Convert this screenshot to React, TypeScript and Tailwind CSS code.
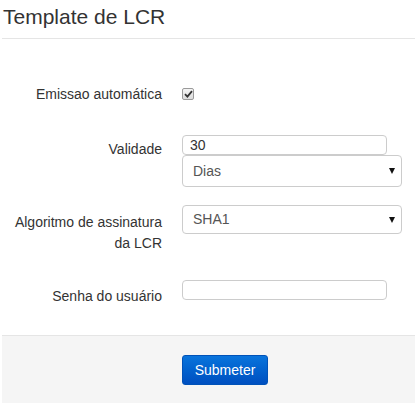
import React from 'react';

const font = { fontFamily: '"Liberation Sans", Arial, sans-serif' };

const SelectBox: React.FC<{ value: string; className?: string }> = ({ value, className }) => (
  <div
    className={`flex items-center justify-between w-[220px] border border-[#cccccc] rounded-[4px] bg-white pl-[10px] pr-[6px] text-[14px] text-[#555555] ${className ?? ''}`}
  >
    <span>{value}</span>
    <svg width="6" height="6" viewBox="0 0 6 6">
      <path d="M0 0 H6 L3 6 Z" fill="#111111" />
    </svg>
  </div>
);

export default function App() {
  return (
    <div className="w-[415px] h-[403px] bg-white text-[#333333] overflow-hidden" style={font}>
      <div className="ml-[2px] flex flex-col h-full">
        {/* Header */}
        <div className="border-b border-[#e5e5e5] h-[39px] pl-[1px] pt-[2px]">
          <h1 className="text-[21px] leading-[29px] text-[#333333]">Template de LCR</h1>
        </div>

        {/* Form */}
        <div className="flex flex-col text-[14px]">
          <div className="flex mt-[45px] gap-[20px]">
            <label className="w-[160px] text-right leading-[20px]">Emissao automática</label>
            <div className="h-[20px] flex items-center">
              <span className="w-[12px] h-[12px] border border-[#9a9a9a] rounded-[2px] bg-gradient-to-b from-[#f4f4f4] to-[#dcdcdc] flex items-center justify-center">
                <svg width="9" height="8" viewBox="0 0 9 8">
                  <path d="M1 4.2 L3.4 6.6 L8 1.2" stroke="#333333" strokeWidth="1.8" fill="none" />
                </svg>
              </span>
            </div>
          </div>

          <div className="flex mt-[31px] gap-[20px]">
            <label className="w-[160px] text-right leading-[20px] pt-[4px]">Validade</label>
            <div className="flex flex-col">
              <div className="w-[205px] h-[20px] border border-[#cccccc] rounded-[4px] px-[7px] leading-[18px] text-[14px] text-[#333333]">
                30
              </div>
              <SelectBox value="Dias" className="h-[32px]" />
            </div>
          </div>

          <div className="flex mt-[18px] gap-[20px]">
            <label className="w-[160px] text-right leading-[21px] pt-[7px]">
              Algoritmo de assinatura
              <br />
              da LCR
            </label>
            <div>
              <SelectBox value="SHA1" className="h-[29px]" />
            </div>
          </div>

          <div className="flex mt-[26px] gap-[20px]">
            <label className="w-[160px] text-right leading-[20px] pt-[6px]">Senha do usuário</label>
            <div className="w-[205px] h-[20px] border border-[#cccccc] rounded-[4px]" />
          </div>
        </div>

        {/* Footer */}
        <div className="mt-[29px] flex-1 border-t border-[#e5e5e5] bg-[#f5f5f5] pt-[19px] pl-[180px]">
          <button className="w-[86px] h-[30px] rounded-[3px] border border-[#0052b8] bg-gradient-to-b from-[#0a74dc] to-[#004fc0] text-white text-[14px]">
            Submeter
          </button>
        </div>
      </div>
    </div>
  );
}
